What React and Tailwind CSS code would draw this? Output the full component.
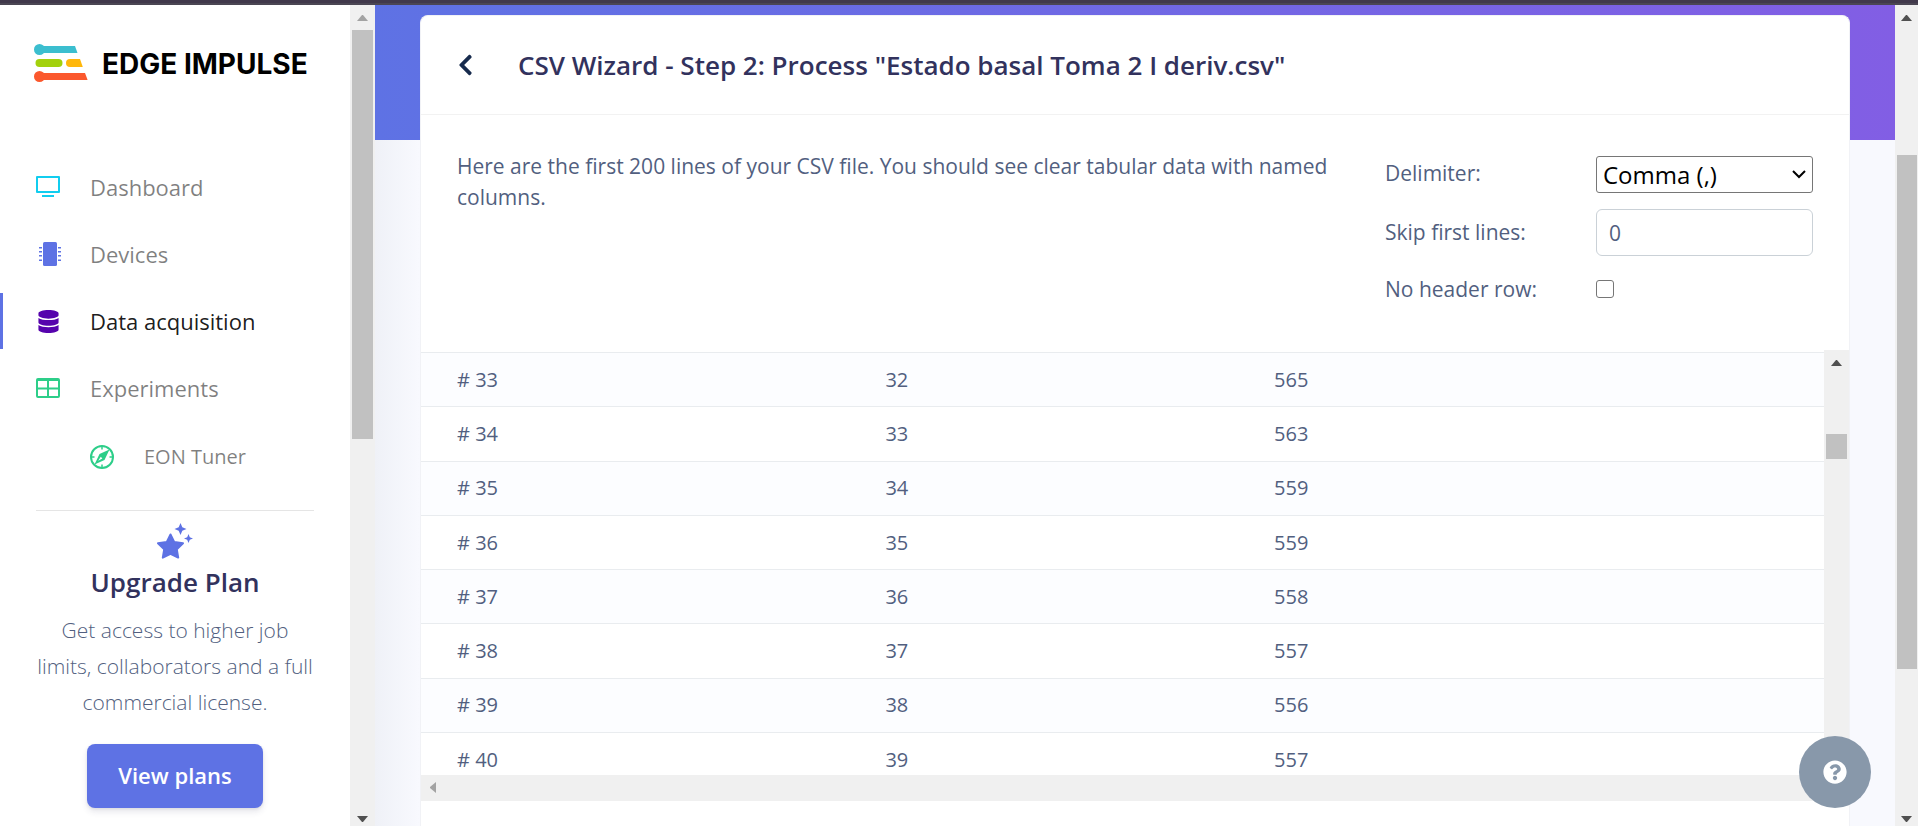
import { FaDatabase, FaChevronLeft, FaQuestionCircle } from "react-icons/fa";

const rows = [
  [33, 32, 565],
  [34, 33, 563],
  [35, 34, 559],
  [36, 35, 559],
  [37, 36, 558],
  [38, 37, 557],
  [39, 38, 556],
  [40, 39, 557],
];

function Arrow({ dir, className }) {
  const points = {
    up: "0,6 11,6 6,0 5,0",
    down: "0,0 11,0 6,6 5,6",
    left: "6,0 6,11 0,6 0,5",
  }[dir];
  const [w, h] = dir === "left" ? [6, 11] : [11, 6];
  return (
    <svg aria-hidden="true" width={w} height={h} viewBox={`0 0 ${w} ${h}`} className={className}>
      <polygon points={points} fill="currentColor" />
    </svg>
  );
}

function Logo() {
  return (
    <a href="#home" className="flex items-center gap-[14px] pl-[34px]">
      <svg aria-hidden="true" width="54" height="38" viewBox="0 0 54 38">
        <circle cx="5.5" cy="5.5" r="5.5" fill="#3bbecf" />
        <path d="M5 2h36l2.500 7H5z" fill="#3bbecf" />
        <rect x="1.500" y="15" width="27" height="8" rx="4" fill="#a3d10c" />
        <path d="M36 15h10l2.800 8H36a4 4 0 0 1 0-8z" fill="#ffb70b" />
        <circle cx="5.500" cy="32.500" r="5.500" fill="#fb582d" />
        <path d="M5 29h46l2.600 7H5z" fill="#fb582d" />
      </svg>
      <span className="pt-px font-[Inter,sans-serif] text-[28px] leading-8 font-bold whitespace-nowrap text-black">EDGE IMPULSE</span>
    </a>
  );
}

function MonitorIcon() {
  return (
    <svg aria-hidden="true" width="24" height="24" viewBox="0 0 24 24">
      <path d="M1 2h22v15H1z" fill="none" stroke="#11cdef" strokeWidth="2" strokeLinejoin="round" />
      <path d="M6 21h12" stroke="#11cdef" strokeWidth="2" />
    </svg>
  );
}

function ChipIcon() {
  return (
    <svg aria-hidden="true" width="28" height="24" viewBox="0 0 28 24" fill="#5e72e4" className="shrink-0">
      <rect x="9" y="0" width="14" height="24" rx="1.500" />
      <path d="M5 5h3v1.500H5zM5 9h3v1.500H5zM5 13h3v1.500H5zM5 17.500h3V19H5zM24 5h3v1.500h-3zM24 9h3v1.500h-3zM24 13h3v1.500h-3zM24 17.500h3V19h-3z" />
    </svg>
  );
}

function TableIcon() {
  return (
    <svg aria-hidden="true" width="24" height="24" viewBox="0 0 24 24" fill="none" stroke="#2dce89" strokeWidth="2">
      <rect x="1" y="3" width="22" height="18" rx="1" />
      <path d="M1 4h22M1 12.500h22M12 4v17" />
    </svg>
  );
}

function CompassIcon() {
  return (
    <svg aria-hidden="true" width="24" height="24" viewBox="0 0 24 24">
      <circle cx="12" cy="12" r="11" fill="none" stroke="#2dce89" strokeWidth="2" />
      <path d="M12 2v2.500M12 19.500V22M2 12h2.500M19.500 12H22" stroke="#2dce89" strokeWidth="1.500" />
      <path fillRule="evenodd" fill="#2dce89" d="M19.500 4.500l-5 10.500-10 4.500 5-10.500zM10.800 11.800l-2.600 4 4.200-2.200z" />
    </svg>
  );
}

function StarIcon() {
  return (
    <svg aria-hidden="true" width="36" height="36" viewBox="0 0 36 36" fill="#5e72e4">
      <path
        d="M13.500 11.500l3.800 7.600 8.700 1.200-6.200 6.100 1.400 8.200-7.700-3.800-7.700 3.800 1.400-8.200L1 20.300l8.700-1.200z"
        stroke="#5e72e4"
        strokeWidth="2"
        strokeLinejoin="round"
      />
      <path d="M23.500 0l1.800 4.200 4.200 1.800-4.200 1.800-1.800 4.200-1.800-4.200L17.500 6l4.200-1.800z" />
      <path d="M31.500 11l1.300 3.200 3.200 1.300-3.200 1.300-1.300 3.200-1.300-3.200-3.200-1.300 3.200-1.300z" />
    </svg>
  );
}

function NavItem({ icon, label, active }) {
  return (
    <li>
      <a
        href={"#" + label.toLowerCase().replace(" ", "-")}
        className={
          active
            ? "flex h-14 items-center gap-[30px] border-l-3 border-[#5e72e4] pl-[33px] text-[22px] text-black/90"
            : "flex h-14 items-center gap-[30px] border-l-3 border-transparent pl-[33px] text-[22px] text-black/50"
        }
      >
        <span className="flex w-6 justify-center">{icon}</span>
        {label}
      </a>
    </li>
  );
}

function Sidebar() {
  return (
    <aside className="flex w-[375px] shrink-0">
      <div className="flex min-w-0 flex-1 flex-col overflow-hidden bg-white pt-[39px]">
        <Logo />
        <nav className="pt-[77px]">
          <ul className="flex flex-col gap-[11px]">
            <NavItem icon={<MonitorIcon />} label="Dashboard" />
            <NavItem icon={<ChipIcon />} label="Devices" />
            <NavItem icon={<FaDatabase size={23} color="#5603ad" />} label="Data acquisition" active />
            <NavItem icon={<TableIcon />} label="Experiments" />
            <li>
              <a href="#eon-tuner" className="flex h-[59px] items-center gap-[30px] pl-[90px] text-xl text-black/50">
                <CompassIcon />
                EON Tuner
              </a>
            </li>
          </ul>
        </nav>
        <section className="mx-9 mt-6 flex flex-col items-center border-t border-black/10 pt-3 text-center">
          <StarIcon />
          <h2 className="mt-[3px] text-[26px] leading-10 font-semibold text-[#32325d]">Upgrade Plan</h2>
          <p className="mt-[10px] text-[21px] leading-9 font-light whitespace-nowrap text-[#525f7f]">
            Get access to higher job
            <br />
            limits, collaborators and a full
            <br />
            commercial license.
          </p>
          <button
            type="button"
            className="mt-6 h-16 rounded-lg bg-[#5e72e4] px-[31px] pb-[2px] text-[22px] font-semibold text-white shadow-[0_4px_6px_rgba(50,50,93,0.11),0_1px_3px_rgba(0,0,0,0.08)]"
          >
            View plans
          </button>
        </section>
      </div>
      <div aria-hidden="true" className="flex w-[25px] flex-col items-center justify-between bg-[#f0f0f0] pt-[10px] pb-1">
        <div className="flex flex-col items-center gap-[9px]">
          <Arrow dir="up" className="text-[#a3a3a3]" />
          <div className="h-[409px] w-[21px] bg-[#c1c1c1]" />
        </div>
        <Arrow dir="down" className="text-[#505050]" />
      </div>
    </aside>
  );
}

function Options() {
  return (
    <form className="grid w-[428px] shrink-0 grid-cols-[211px_1fr] items-center text-[21px] text-[#525f7f]">
      <label htmlFor="delimiter" className="pb-[2px]">Delimiter:</label>
      <div className="relative">
        <select
          id="delimiter"
          className="block h-[37px] w-full appearance-none rounded-[3px] border border-[#767676] bg-white pl-[6px] text-2xl leading-8 text-black"
        >
          <option>Comma (,)</option>
        </select>
        <svg aria-hidden="true" width="14" height="9" viewBox="0 0 14 9" className="pointer-events-none absolute top-[14px] right-[7px]">
          <path d="M1 1l6 6 6-6" fill="none" stroke="#000" strokeWidth="2" />
        </svg>
      </div>
      <label htmlFor="skip-lines">Skip first lines:</label>
      <input
        id="skip-lines"
        type="text"
        defaultValue="0"
        className="my-4 h-[47px] w-full rounded-md border border-[#cad1d7] bg-white px-3 text-[21px]"
      />
      <label htmlFor="no-header" className="pt-[2px]">No header row:</label>
      <input id="no-header" type="checkbox" className="my-2 size-[18px] appearance-none rounded-[3px] border border-[#767676] bg-white" />
    </form>
  );
}

function DataTable() {
  return (
    <div>
      <div className="flex h-[425px]">
        <div className="min-w-0 flex-1 overflow-hidden pt-[2px]">
          <table className="h-[434px] w-full table-fixed border-collapse text-[20px] text-[#525f7f]">
            <colgroup>
              <col className="w-[33.100%]" />
              <col className="w-[27.700%]" />
              <col />
            </colgroup>
            <tbody>
              {rows.map(([line, x, y]) => (
                <tr key={line} className="border-t border-[#e9ecef] odd:bg-[#fcfdff]">
                  <td className="pl-9"># {line}</td>
                  <td>{x}</td>
                  <td>{y}</td>
                </tr>
              ))}
            </tbody>
          </table>
        </div>
        <div aria-hidden="true" className="flex w-[25px] flex-col items-center bg-[#f0f0f0] pt-[10px]">
          <Arrow dir="up" className="text-[#505050]" />
          <div className="mt-[68px] h-[25px] w-[21px] bg-[#c1c1c1]" />
        </div>
      </div>
      <div aria-hidden="true" className="flex h-[26px] items-center bg-[#f0f0f0] pb-px pl-[9px]">
        <Arrow dir="left" className="text-[#a3a3a3]" />
      </div>
    </div>
  );
}

export default function App() {
  return (
    <div className="flex h-screen flex-col overflow-hidden font-['Open_Sans',sans-serif]">
      <div className="h-[5px] shrink-0 border-b-2 border-[#4b4653] bg-[#41394b]" />
      <div className="flex min-h-0 flex-1">
        <Sidebar />
        <main className="min-w-0 flex-1 overflow-hidden bg-[#f8f9fe] bg-[linear-gradient(87deg,#5e72e4,#825ee4),linear-gradient(90deg,#eff1f7,#f8f9fe)] bg-[length:100%_135px,44px_100%] bg-no-repeat px-[45px] pt-[10px]">
          <div className="flex min-h-full flex-col rounded-t-lg border border-b-0 border-[#f1f2f6] bg-white">
            <header className="flex h-[99px] items-center gap-[44px] border-b border-black/5 pl-9">
              <button type="button" aria-label="Back" className="flex w-[17px] justify-center">
                <FaChevronLeft size={24} color="#172b4d" />
              </button>
              <h1 className="text-[26px] leading-9 font-semibold text-[#32325d]">
                CSV Wizard - Step 2: Process "Estado basal Toma 2 I deriv.csv"
              </h1>
            </header>
            <div className="flex h-[235px] items-start justify-between gap-9 px-9 pt-9">
              <p className="w-[880px] text-[21px] leading-[31px] text-[#525f7f]">
                Here are the first 200 lines of your CSV file. You should see clear tabular data with named columns.
              </p>
              <div className="pt-[5px]">
                <Options />
              </div>
            </div>
            <DataTable />
          </div>
        </main>
        <div aria-hidden="true" className="flex w-[23px] shrink-0 flex-col items-center justify-between bg-[#f0f0f0] pt-[10px] pb-1">
          <div className="flex flex-col items-center">
            <Arrow dir="up" className="text-[#505050]" />
            <div className="mt-[134px] h-[514px] w-5 bg-[#c1c1c1]" />
          </div>
          <Arrow dir="down" className="text-[#505050]" />
        </div>
      </div>
      <button
        type="button"
        aria-label="Help"
        className="fixed right-[47px] bottom-[18px] flex size-[72px] items-center justify-center rounded-full bg-[#8898aa]"
      >
        <FaQuestionCircle size={24} color="#ffffff" />
      </button>
    </div>
  );
}
